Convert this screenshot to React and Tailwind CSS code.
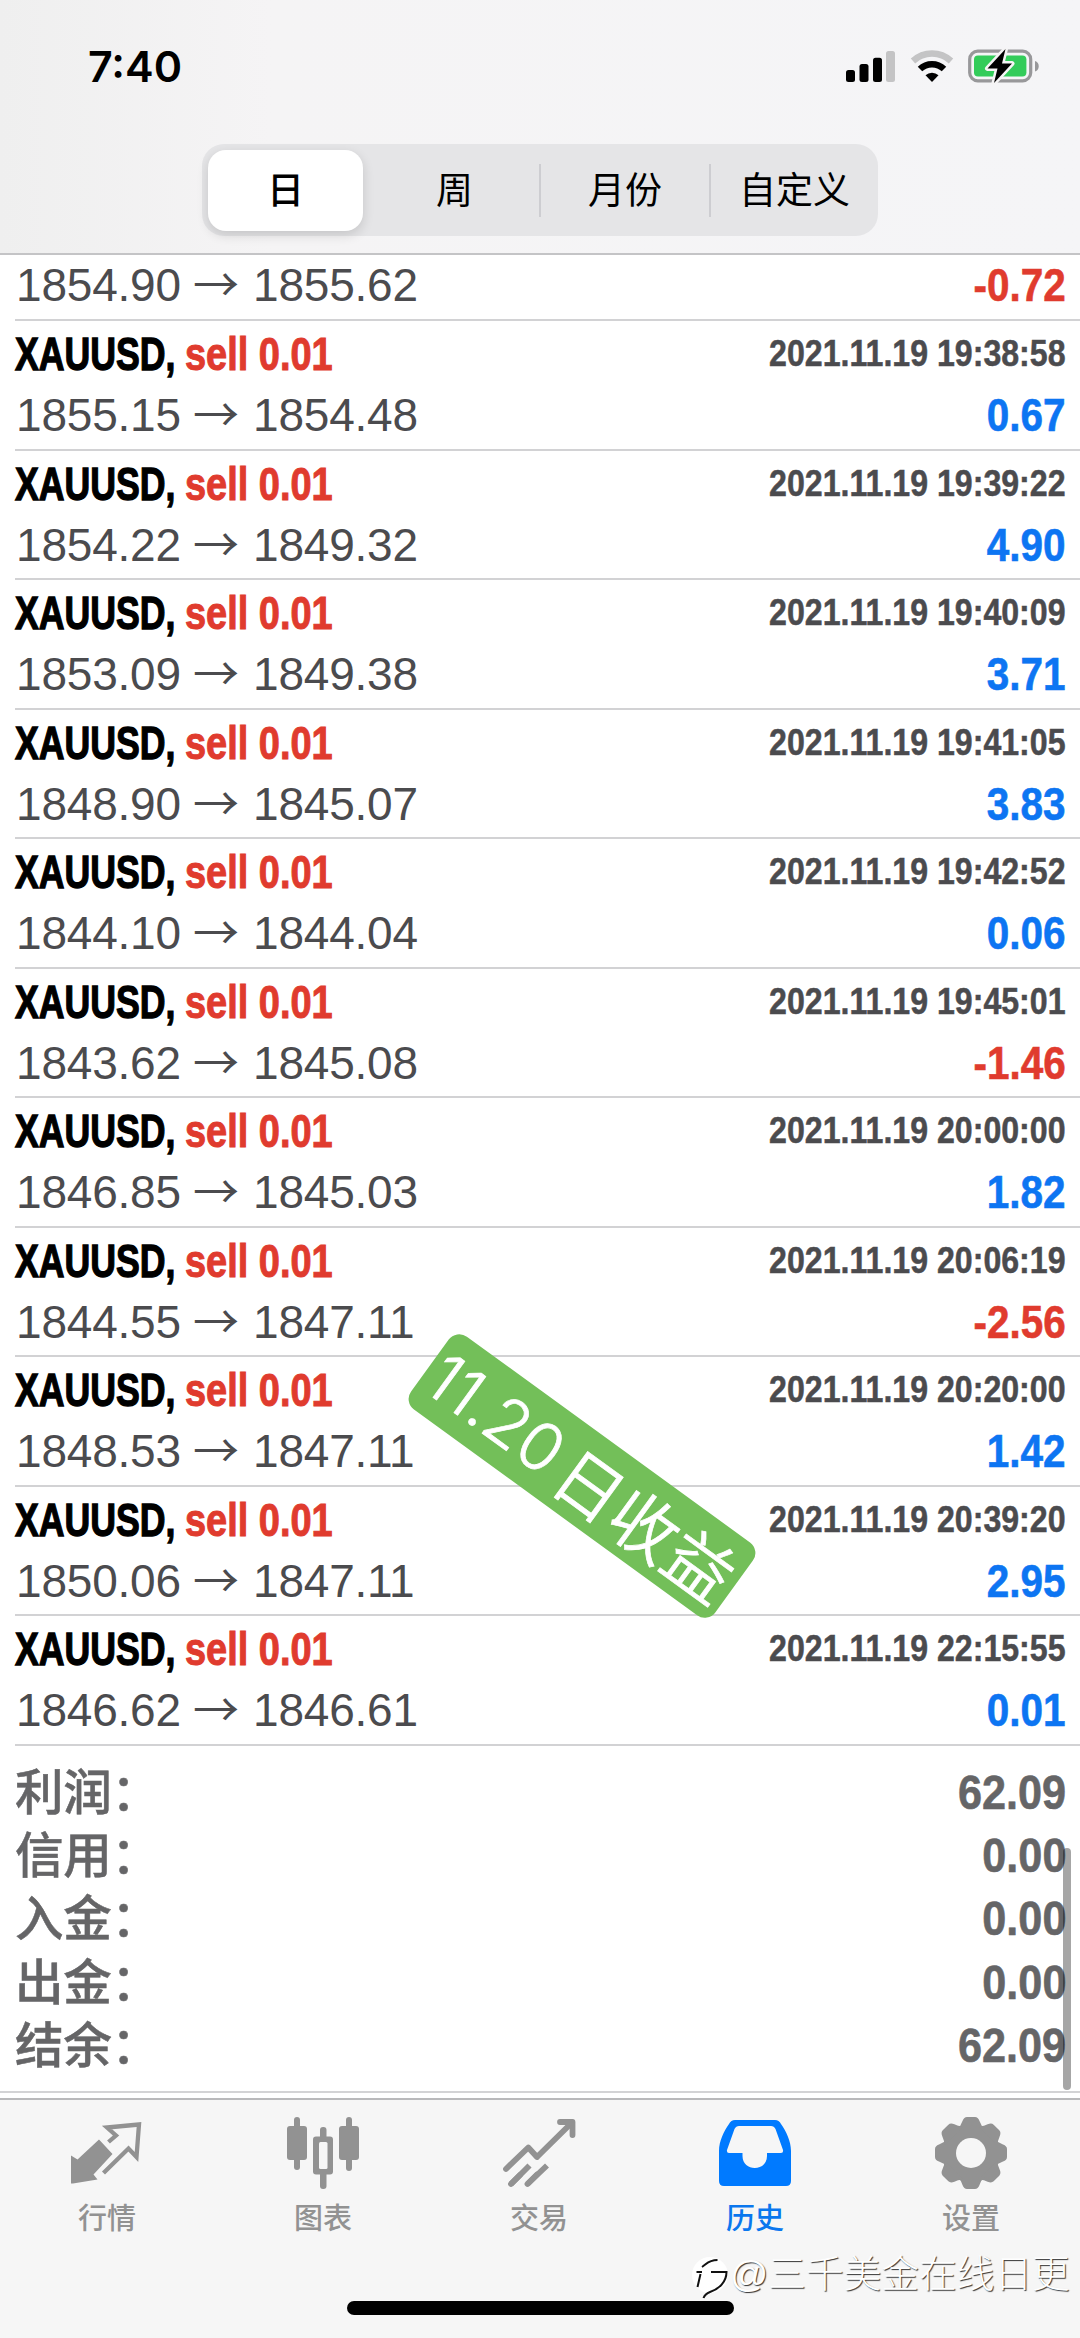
const trades = [
  { open: "1855.15", close: "1854.48", time: "2021.11.19 19:38:58", profit: "0.67" },
  { open: "1854.22", close: "1849.32", time: "2021.11.19 19:39:22", profit: "4.90" },
  { open: "1853.09", close: "1849.38", time: "2021.11.19 19:40:09", profit: "3.71" },
  { open: "1848.90", close: "1845.07", time: "2021.11.19 19:41:05", profit: "3.83" },
  { open: "1844.10", close: "1844.04", time: "2021.11.19 19:42:52", profit: "0.06" },
  { open: "1843.62", close: "1845.08", time: "2021.11.19 19:45:01", profit: "-1.46" },
  { open: "1846.85", close: "1845.03", time: "2021.11.19 20:00:00", profit: "1.82" },
  { open: "1844.55", close: "1847.11", time: "2021.11.19 20:06:19", profit: "-2.56" },
  { open: "1848.53", close: "1847.11", time: "2021.11.19 20:20:00", profit: "1.42" },
  { open: "1850.06", close: "1847.11", time: "2021.11.19 20:39:20", profit: "2.95" },
  { open: "1846.62", close: "1846.61", time: "2021.11.19 22:15:55", profit: "0.01" },
];

const summary = [
  { label: "利润：", value: "62.09" },
  { label: "信用：", value: "0.00" },
  { label: "入金：", value: "0.00" },
  { label: "出金：", value: "0.00" },
  { label: "结余：", value: "62.09" },
];

function StatusBar() {
  return (
    <div className="flex h-[132px] items-start justify-between pt-[48px] pl-[88px] pr-[40px]">
      <span className="font-['Inter',sans-serif] text-[43px] font-semibold leading-[37px] text-black">7:40</span>
      <div className="flex items-start">
        <svg width="50" height="36" viewBox="0 0 50 36" className="mr-[14px]">
          <rect x="0" y="22" width="9" height="12" rx="2.5" />
          <rect x="13.5" y="16" width="9" height="18" rx="2.5" />
          <rect x="27" y="9.7" width="9" height="24.3" rx="2.5" />
          <rect x="40" y="3" width="9" height="31" rx="2.5" fill="#c4c4c5" />
        </svg>
        <svg width="44" height="36" viewBox="0 0 44 36" className="mr-[14px]" fill="none">
          <path d="M3 13a28 28 0 0 1 38 0" stroke="#c4c4c5" strokeWidth="6.5" />
          <path d="M10 21a17.5 17.5 0 0 1 24 0" stroke="#000" strokeWidth="6.5" />
          <path d="M15.5 27.2a9.5 9.5 0 0 1 13 0L22 34z" fill="#000" />
        </svg>
        <svg width="72" height="36" viewBox="0 0 72 36">
          <rect x="1.7" y="3.2" width="61" height="29.6" rx="8" fill="none" stroke="#98989a" strokeWidth="3.2" />
          <rect x="6" y="7.5" width="52.4" height="21" rx="4" fill="#33cc5a" />
          <path d="M67 13c5 1.500 5 9 0 10.500z" fill="#98989a" />
          <path
            d="M37.500 1 19.500 20.500h10l-3.500 14.500 18-19.500h-10z"
            fill="#000"
            stroke="#f5f4f5"
            strokeWidth="5"
            strokeLinejoin="round"
            paintOrder="stroke"
          />
        </svg>
      </div>
    </div>
  );
}

function Segments() {
  return (
    <div className="mx-auto mt-[12px] flex h-[92px] w-[676px] items-center rounded-[22px] bg-[#e5e5e7] text-[37px] font-normal leading-none text-black">
      <div className="ml-[6px] flex h-[81px] w-[155px] items-center justify-center rounded-[18px] bg-white pt-[3px] font-medium shadow-[0_4px_12px_rgba(0,0,0,0.14)]">
        日
      </div>
      <div className="flex h-full w-[176px] items-center justify-center pl-[7px] pt-[3px]">周</div>
      <div className="h-[53px] w-[2px] bg-[#cdcdd1]" />
      <div className="flex h-full w-[168px] items-center justify-center pt-[3px]">月份</div>
      <div className="h-[53px] w-[2px] bg-[#cdcdd1]" />
      <div className="flex h-full w-[167px] items-center justify-center pt-[3px]">自定义</div>
    </div>
  );
}

function PriceLine({ open, close, profit }) {
  return (
    <div className="flex h-[52px] items-center justify-between text-[46px] leading-[52px]">
      <div className="flex pl-px tracking-[-0.2px] text-[#4b4b4e]">
        <span className="w-[177px]">{open}</span>
        <span className="-mt-[4px] h-[52px] w-[60px] font-['Noto_Sans_CJK_SC',sans-serif]">→</span>
        <span>{close}</span>
      </div>
      <span
        className={`origin-right scale-x-[0.88] font-bold [-webkit-text-stroke:0.6px] ${
          profit.startsWith("-") ? "text-[#e03b2e]" : "text-[#0d75f2]"
        }`}
      >
        {profit}
      </span>
    </div>
  );
}

function TradeRow({ trade }) {
  return (
    <div className="ml-[15px] h-[129.500px] border-b-2 border-[#d2d2d4] pr-[14px] pt-[4px]">
      <div className="mb-[6px] flex h-[58px] items-center justify-between font-bold leading-[58px]">
        <div className="flex text-[46px]">
          <span className="w-[170px] origin-left scale-x-[0.775] whitespace-nowrap text-black [-webkit-text-stroke:1.3px]">
            XAUUSD,
          </span>
          <span className="origin-left scale-x-[0.825] whitespace-nowrap text-[#e03b2e] [-webkit-text-stroke:1px]">
            sell 0.01
          </span>
        </div>
        <span className="origin-right scale-x-[0.868] text-[37px] text-[#4b4b4e] [-webkit-text-stroke:0.5px]">
          {trade.time}
        </span>
      </div>
      <PriceLine {...trade} />
    </div>
  );
}

function Summary() {
  return (
    <div className="h-[347px] border-b-2 border-[#d3d3d5] pl-[15px] pr-[14px] pt-[15px] font-bold text-[#656567]">
      {summary.map((row) => (
        <div key={row.label} className="flex h-[63.300px] items-center justify-between">
          <span className="pt-[2px] text-[48.500px] leading-[63px] font-medium tracking-[-0.3px] [-webkit-text-stroke:0.5px]">
            {row.label}
          </span>
          <span className="origin-right scale-x-[0.9] text-[48px] leading-[63px] [-webkit-text-stroke:0.6px]">
            {row.value}
          </span>
        </div>
      ))}
    </div>
  );
}

function QuotesIcon() {
  return (
    <svg width="72" height="72" viewBox="0 0 72 72" fill="none">
      <path d="M0 38.500 6.500 42.500 28 22.500 41.500 37 22.500 57.500 26.500 62.500 2 66.500H0z" fill="#929292" />
      <path d="M37.500 25 45 18.500 36 10.500 68 7.500 65.500 40 57.500 31.500 32.500 56" stroke="#929292" strokeWidth="4.300" />
    </svg>
  );
}

function ChartIcon() {
  return (
    <svg width="72" height="72" viewBox="0 0 72 72" fill="#929292">
      <rect x="0" y="9" width="20" height="34" rx="3" />
      <rect x="7" y="0" width="6" height="53" rx="3" />
      <rect x="52" y="9" width="20" height="34" rx="3" />
      <rect x="59" y="0" width="6" height="54" rx="3" />
      <rect x="33" y="10" width="6.500" height="62" rx="3" />
      <rect x="26" y="19.500" width="20" height="38" rx="3" />
      <rect x="32" y="25" width="8.500" height="27" rx="1.500" fill="#f6f6f6" />
    </svg>
  );
}

function TradeIcon() {
  return (
    <svg width="73" height="72" viewBox="0 0 73 72" fill="none" stroke="#929292" strokeWidth="5.800">
      <g strokeLinecap="round" strokeLinejoin="round">
        <path d="M3 52 25.300 30.500 34 40 69 5.500" />
        <path d="M57 5H69.500V18" />
        <path d="M8 67 17 58M24.500 67 34 57.500" />
      </g>
      <path d="M8 67 26.500 48.500M24.500 67 44 48.500" />
    </svg>
  );
}

function HistoryIcon() {
  return (
    <svg width="72" height="72" viewBox="0 0 72 72">
      <path
        d="M16 3H56Q60 3 62 7C67 14 72 24 72 34V64Q72 69 67 69H5Q0 69 0 64V34C0 24 5 14 10 7Q12 3 16 3z"
        fill="#007aff"
      />
      <path
        d="M20 9H52Q55 9 56.500 12L64 33Q64.500 36 62 36H48V39C48 55 23.500 55 23.500 39V36H10Q7.500 36 8 33L15.500 12Q17 9 20 9z"
        fill="#f6f6f6"
      />
    </svg>
  );
}

function SettingsIcon() {
  return (
    <svg width="72" height="72" viewBox="0 0 72 72">
      <g fill="#929292">
        <circle cx="36" cy="36" r="29" />
        {[0, 45, 90, 135, 180, 225, 270, 315].map((angle) => (
          <path
            key={angle}
            d="M22 12Q26 9 27.500 4Q29 0 32 0H40Q43 0 44.500 4Q46 9 50 12z"
            transform={`rotate(${angle} 36 36)`}
          />
        ))}
      </g>
      <circle cx="36" cy="36" r="15" fill="#f6f6f6" />
    </svg>
  );
}

const tabs = [
  { label: "行情", Icon: QuotesIcon },
  { label: "图表", Icon: ChartIcon },
  { label: "交易", Icon: TradeIcon },
  { label: "历史", Icon: HistoryIcon, active: true },
  { label: "设置", Icon: SettingsIcon },
];

function TabBar() {
  return (
    <nav className="relative mt-[5px] h-[241px] border-t-2 border-[#b9b9bb] bg-[#f6f6f6]">
      <div className="-ml-px flex pt-[17px]">
        {tabs.map(({ label, Icon, active }) => (
          <div key={label} className="flex w-[216px] flex-col items-center">
            <Icon />
            <span
              className={`mt-[14px] text-[29px] font-medium leading-[32px] ${
                active ? "text-[#0a77ee]" : "text-[#929292]"
              }`}
            >
              {label}
            </span>
          </div>
        ))}
      </div>
      <div className="absolute left-[347px] top-[201px] h-[14px] w-[387px] rounded-full bg-black" />
      <div className="absolute left-[690px] top-[149px] flex items-center text-[37.700px] font-light leading-[50px] text-white [text-shadow:1px_1px_1px_#333]">
        <svg width="40" height="50" viewBox="0 0 40 50" fill="none">
          <circle cx="20" cy="26" r="18" fill="#fff" />
          <path
            d="M12 18C17 15 18 11 27.500 11M6.500 23H12M21 23H36.500C36.500 33 29 40 20 43Q15 45 13.500 49M10.500 25 7.500 38"
            stroke="#111"
            strokeWidth="2"
          />
        </svg>
        <span className="whitespace-nowrap">@三千美金在线日更</span>
      </div>
    </nav>
  );
}

export default function App() {
  return (
    <div className="relative h-[2338px] w-[1080px] overflow-hidden bg-white font-['Liberation_Sans','Noto_Sans_CJK_SC',sans-serif]">
      <header className="h-[255px] border-b-2 border-[#c4c4c6] bg-linear-to-r from-[#efefef] via-[#f5f4f5] via-25% to-[#f5f5f7]">
        <StatusBar />
        <Segments />
      </header>
      <div className="ml-[15px] h-[66px] border-b-2 border-[#d2d2d4] pr-[14px] pt-[4px]">
        <PriceLine open="1854.90" close="1855.62" profit="-0.72" />
      </div>
      {trades.map((trade) => (
        <TradeRow key={trade.time} trade={trade} />
      ))}
      <Summary />
      <TabBar />
      <div className="absolute left-[1063px] top-[1848px] h-[242px] w-[8px] rounded-full bg-black/35" />
      <div className="absolute left-[394px] top-[1431px] flex h-[90px] w-[376px] rotate-[36deg] items-center justify-center gap-[8px] whitespace-nowrap rounded-[13px] bg-[#73bf59] leading-none text-white [-webkit-text-stroke:0.7px]">
        <span className="font-['Inter',sans-serif] text-[66px] font-light">11.20</span>
        <span className="font-['Noto_Sans_CJK_SC',sans-serif] text-[68px] font-[350]">日收益</span>
      </div>
    </div>
  );
}
